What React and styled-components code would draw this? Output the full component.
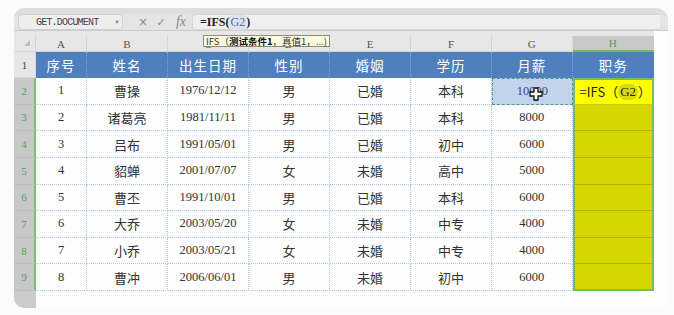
import React from "react";
import styled, { createGlobalStyle, css } from "styled-components";

const Global = createGlobalStyle`
  html, body { margin: 0; padding: 0; background: #fbfbfc; }
  body { font-family: "Liberation Serif", "Noto Sans CJK SC", serif; }
`;

const Window = styled.div`
  position: relative;
  margin: 8px 0 0 14px;
  width: 654px;
  height: 300px;
  background: #fdfdfd;
  border-top-left-radius: 10px;
  border-top-right-radius: 12px;
`;

const Toolbar = styled.div`
  height: 23px;
  box-sizing: border-box;
  background: #e4e4e4;
  border-top-left-radius: 10px;
  border-top-right-radius: 12px;
  border-top: 6px solid #dedede;
  border-bottom: 1px solid #cdcdcd;
  display: flex;
  align-items: center;
  padding: 0 8px 0 4px;
`;

const NameBox = styled.div`
  width: 105px;
  height: 16px;
  box-sizing: border-box;
  background: #eeeeee;
  border: 1px solid #d0d0d0;
  border-radius: 4px;
  display: flex;
  align-items: center;
  padding-left: 17px;
  padding-right: 4px;
  font-family: "Liberation Mono", monospace;
  font-size: 10px;
  color: #444;
  letter-spacing: -0.8px;
`;

const NameText = styled.span`
  flex: 1;
`;

const Caret = styled.span`
  font-size: 6px;
  color: #888;
`;

const ToolIcon = styled.span`
  width: ${(p) => p.$w}px;
  margin-left: ${(p) => p.$ml || 0}px;
  display: flex;
  justify-content: center;
  color: #8a8a8a;
  font-family: ${(p) => (p.$serif ? '"Liberation Serif", serif' : '"DejaVu Sans", sans-serif')};
  font-style: ${(p) => (p.$italic ? "italic" : "normal")};
  font-size: ${(p) => p.$size}px;
`;

const FormulaBox = styled.div`
  flex: 1;
  margin-left: 2px;
  height: 16px;
  box-sizing: border-box;
  background: #efefef;
  border: 1px solid #d6d6d6;
  border-right: none;
  border-radius: 3px 0 0 3px;
  display: flex;
  align-items: center;
  padding-left: 7px;
  font-family: "Liberation Serif", "Noto Sans CJK SC", serif;
  font-size: 12px;
  font-weight: bold;
  color: #222;
`;

const RefTok = styled.span`
  color: #5a6f8c;
  font-weight: normal;
  ${(p) =>
    p.$hl &&
    css`
      background: #d9e3f2;
      border-radius: 3px;
      padding: 0 1px;
    `}
`;

const Grid = styled.div`
  display: grid;
  width: 640px;
  grid-template-columns: 22px 51px 81px 81px 81px 81px 81px 80.5px 81.5px;
  grid-template-rows: 21px 26px repeat(8, 26.625px) 17px;
  background: #fdfdfd;
`;

const ColHead = styled.div`
  margin-top: 5px;
  box-sizing: border-box;
  display: flex;
  align-items: center;
  justify-content: center;
  font-family: "Liberation Serif", serif;
  font-size: 11px;
  color: ${(p) => (p.$sel ? "#4fa05a" : "#555")};
  background: ${(p) => (p.$sel ? "#c9c9c9" : "#e7e7e7")};
  border-right: 1px solid ${(p) => (p.$sel ? "#c9c9c9" : "#d4d4d4")};
  border-bottom: ${(p) => (p.$sel ? "2px solid #6dbb62" : "1px solid #d8d8d8")};
`;

const HeadStrip = styled.div`
  grid-column: 1 / -1;
  grid-row: 1;
  background: #e7e7e7;
`;

const Corner = styled.div`
  grid-column: 1;
  grid-row: 1;
  margin-top: 5px;
  display: flex;
  align-items: flex-end;
  justify-content: flex-end;
  padding: 0 5px 5px 0;
  border-right: 1px solid #d4d4d4;
  border-bottom: 1px solid #d8d8d8;
`;

const Tri = styled.div`
  width: 0;
  height: 0;
  border-left: 6px solid transparent;
  border-bottom: 6px solid #bdbdbd;
`;

const RowHead = styled.div`
  box-sizing: border-box;
  display: flex;
  align-items: center;
  justify-content: center;
  font-family: "Liberation Serif", serif;
  font-size: 11px;
  color: ${(p) => (p.$sel ? "#52a25c" : "#444")};
  background: ${(p) => (p.$sel ? "#c8c8c8" : "#e6e6e6")};
  border-right: ${(p) => (p.$sel ? "2px solid #79c06d" : "1px solid #d4d4d4")};
  border-bottom: 1px solid ${(p) => (p.$sel ? "#bdbdbd" : "#d6d6d6")};
`;

const RowTail = styled.div`
  background: #cbcbcb;
  border-bottom-left-radius: 10px;
`;

const HeadCell = styled.div`
  box-sizing: border-box;
  display: flex;
  align-items: center;
  justify-content: center;
  background: #4f7fbd;
  color: #fff;
  font-family: "Noto Sans CJK SC", sans-serif;
  font-size: 13.5px;
  letter-spacing: 1px;
  border-right: 1px dotted #86a8d6;
  ${(p) =>
    p.$last &&
    css`
      border-right: none;
    `}
`;

const Cell = styled.div`
  box-sizing: border-box;
  display: flex;
  align-items: center;
  justify-content: center;
  color: #333;
  font-family: ${(p) =>
    p.$num ? '"Liberation Serif", serif' : '"Noto Sans CJK SC", sans-serif'};
  font-size: ${(p) => (p.$num ? "12.5px" : "13px")};
  background: #fdfdfd;
  border-right: 1px dotted #a9c1e2;
  border-bottom: 1px dotted #b3c8e6;
  ${(p) =>
    p.$copy &&
    css`
      background: #c5d2ec;
      border: 1px dashed #4f9a78;
      color: #3c4c6a;
    `}
`;

const SelCell = styled.div`
  box-sizing: border-box;
  display: flex;
  align-items: center;
  justify-content: flex-start;
  padding-left: 5px;
  background: ${(p) => (p.$active ? "#ffff00" : "#d5d800")};
  border-left: 2px solid #74bd67;
  border-right: 2px solid #74bd67;
  border-top: ${(p) => (p.$first ? "2px solid #74bd67" : "none")};
  border-bottom: ${(p) =>
    p.$last ? "2px solid #74bd67" : "1px solid rgba(110, 110, 0, 0.35)"};
  font-family: "Noto Sans CJK SC", sans-serif;
  font-size: 13px;
  color: #222;
`;

const Pill = styled.span`
  background: rgba(70, 90, 60, 0.22);
  border-radius: 8px;
  padding: 0 2px;
  font-family: "Liberation Serif", serif;
`;

const Tooltip = styled.div`
  position: absolute;
  left: 189px;
  top: 27px;
  height: 12px;
  box-sizing: border-box;
  padding: 0 2px;
  background: #fdfbe0;
  border: 1px solid #8c8c7a;
  display: flex;
  align-items: center;
  white-space: nowrap;
  font-family: "Noto Sans CJK SC", sans-serif;
  font-size: 9.5px;
  line-height: 10px;
  color: #333;
`;

const Bold = styled.b`
  font-weight: bold;
  color: #111;
`;

const CursorMark = styled.svg`
  position: absolute;
  left: 515px;
  top: 79px;
`;

const headers = ["序号", "姓名", "出生日期", "性别", "婚姻", "学历", "月薪", "职务"];
const rows = [
  [1, "曹操", "1976/12/12", "男", "已婚", "本科", 10000],
  [2, "诸葛亮", "1981/11/11", "男", "已婚", "本科", 8000],
  [3, "吕布", "1991/05/01", "男", "已婚", "初中", 6000],
  [4, "貂蝉", "2001/07/07", "女", "未婚", "高中", 5000],
  [5, "曹丕", "1991/10/01", "男", "已婚", "本科", 6000],
  [6, "大乔", "2003/05/20", "女", "未婚", "中专", 4000],
  [7, "小乔", "2003/05/21", "女", "未婚", "中专", 4000],
  [8, "曹冲", "2006/06/01", "男", "未婚", "初中", 6000],
];
const letters = ["A", "B", "C", "D", "E", "F", "G", "H"];

export default function App() {
  return (
    <>
      <Global />
      <Window>
        <Toolbar>
          <NameBox>
            <NameText>GET.DOCUMENT</NameText>
            <Caret>▼</Caret>
          </NameBox>
          <ToolIcon $ml={13} $w={14} $size={12}>×</ToolIcon>
          <ToolIcon $w={22} $size={11}>✓</ToolIcon>
          <ToolIcon $w={18} $size={14} $serif $italic>fx</ToolIcon>
          <FormulaBox>
            =IFS(<RefTok $hl>G2</RefTok>)
          </FormulaBox>
        </Toolbar>
        <Grid>
          <HeadStrip />
          <Corner>
            <Tri />
          </Corner>
          {letters.map((l, i) => (
            <ColHead key={l} $sel={l === "H"} style={{ gridColumn: i + 2, gridRow: 1 }}>
              {l}
            </ColHead>
          ))}
          <RowHead>1</RowHead>
          {headers.map((h, i) => (
            <HeadCell key={h} $last={i === headers.length - 1}>
              {h}
            </HeadCell>
          ))}
          {rows.map((r, ri) => (
            <React.Fragment key={ri}>
              <RowHead $sel>{ri + 2}</RowHead>
              <Cell $num>{r[0]}</Cell>
              <Cell>{r[1]}</Cell>
              <Cell $num>{r[2]}</Cell>
              <Cell>{r[3]}</Cell>
              <Cell>{r[4]}</Cell>
              <Cell>{r[5]}</Cell>
              <Cell $num $copy={ri === 0}>
                {r[6]}
              </Cell>
              <SelCell $active={ri === 0} $first={ri === 0} $last={ri === rows.length - 1}>
                {ri === 0 && (
                  <>
                    =IFS（<Pill>G2</Pill>）
                  </>
                )}
              </SelCell>
            </React.Fragment>
          ))}
          <RowTail />
        </Grid>
        <Tooltip>
          IFS（<Bold>测试条件1</Bold>，真值1，...)
        </Tooltip>
        <CursorMark width="14" height="14" viewBox="0 0 14 14">
          <path
            d="M5 1h4v4h4v4H9v4H5V9H1V5h4z"
            fill="#fff"
            stroke="#111"
            strokeWidth="1.3"
            strokeLinejoin="miter"
          />
        </CursorMark>
      </Window>
    </>
  );
}
